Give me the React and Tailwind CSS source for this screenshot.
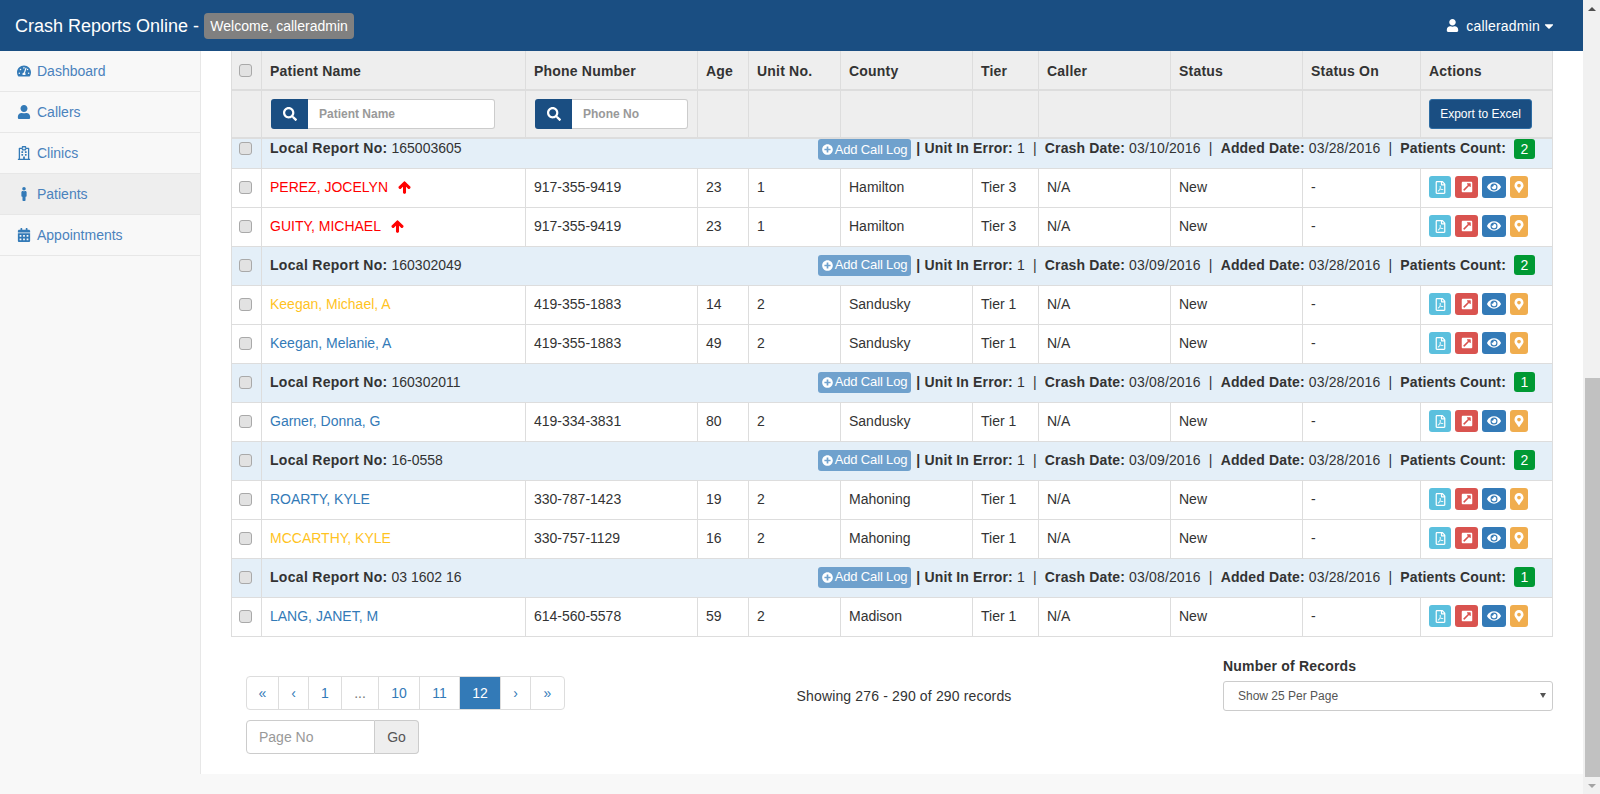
import {
    FaTachometerAlt, FaUser, FaRegHospital, FaMale, FaCalendarAlt, FaSearch, FaArrowUp,
    FaCaretDown, FaPlusCircle, FaRegFilePdf, FaExternalLinkSquareAlt, FaEye, FaMapMarkerAlt,
} from "react-icons/fa";

const NAV = [
    { label: "Dashboard", icon: FaTachometerAlt },
    { label: "Callers", icon: FaUser },
    { label: "Clinics", icon: FaRegHospital },
    { label: "Patients", icon: FaMale, active: true },
    { label: "Appointments", icon: FaCalendarAlt },
];

const HEADERS = ["Patient Name", "Phone Number", "Age", "Unit No.", "County", "Tier", "Caller", "Status", "Status On", "Actions"];

const GROUPS = [
    {
        report: "165003605", crash: "03/10/2016", count: 2, first: true,
        patients: [
            { name: "PEREZ, JOCELYN", color: "text-[#ff0000]", up: true, phone: "917-355-9419", age: 23, unit: 1, county: "Hamilton", tier: "Tier 3" },
            { name: "GUITY, MICHAEL", color: "text-[#ff0000]", up: true, phone: "917-355-9419", age: 23, unit: 1, county: "Hamilton", tier: "Tier 3" },
        ],
    },
    {
        report: "160302049", crash: "03/09/2016", count: 2,
        patients: [
            { name: "Keegan, Michael, A", color: "text-[#ffc31f]", phone: "419-355-1883", age: 14, unit: 2, county: "Sandusky", tier: "Tier 1" },
            { name: "Keegan, Melanie, A", color: "text-[#337ab7]", phone: "419-355-1883", age: 49, unit: 2, county: "Sandusky", tier: "Tier 1" },
        ],
    },
    {
        report: "160302011", crash: "03/08/2016", count: 1,
        patients: [
            { name: "Garner, Donna, G", color: "text-[#337ab7]", phone: "419-334-3831", age: 80, unit: 2, county: "Sandusky", tier: "Tier 1" },
        ],
    },
    {
        report: "16-0558", crash: "03/09/2016", count: 2,
        patients: [
            { name: "ROARTY, KYLE", color: "text-[#337ab7]", phone: "330-787-1423", age: 19, unit: 2, county: "Mahoning", tier: "Tier 1" },
            { name: "MCCARTHY, KYLE", color: "text-[#ffc31f]", phone: "330-757-1129", age: 16, unit: 2, county: "Mahoning", tier: "Tier 1" },
        ],
    },
    {
        report: "03 1602 16", crash: "03/08/2016", count: 1,
        patients: [
            { name: "LANG, JANET, M", color: "text-[#337ab7]", phone: "614-560-5578", age: 59, unit: 2, county: "Madison", tier: "Tier 1" },
        ],
    },
];

const PAGES = [
    { label: "«", w: "w-[32px]" },
    { label: "‹", w: "w-[30px]" },
    { label: "1", w: "w-[33px]" },
    { label: "...", w: "w-[37px]", muted: true },
    { label: "10", w: "w-[41px]" },
    { label: "11", w: "w-[40px]" },
    { label: "12", w: "w-[41px]", active: true },
    { label: "›", w: "w-[30px]" },
    { label: "»", w: "w-[33px]" },
];

function Check() {
    return <input type="checkbox" className="block h-[13px] w-[13px] appearance-none rounded-[3px] border border-[#a9a9a9] bg-[#e2e2e2]" />;
}

function SearchInput({ placeholder }) {
    return (
        <div className="ml-[1px] flex h-[30px]">
            <span className="flex w-[37px] shrink-0 items-center justify-center rounded-l-[3px] bg-[#1a4e82] text-white">
                <FaSearch size={14} />
            </span>
            <input
                placeholder={placeholder}
                className="w-full min-w-0 rounded-r-[3px] border border-l-0 border-[#ccc] bg-white px-[11px] text-xs font-bold placeholder:text-[#999]"
            />
        </div>
    );
}

function GroupRow({ group }) {
    return (
        <tr className="bg-[#e4eff8]">
            <td className={`border border-[#ddd] px-[7px] align-top ${group.first ? "h-[30px] pt-[3px]" : "h-[39px] pt-[12px]"}`}><Check /></td>
            <td colSpan={10} className={`border border-[#ddd] pr-[17px] pl-[8px] align-top ${group.first ? "" : "pt-[8px]"}`}>
                <div className="flex items-start justify-between">
                    <span className={`leading-[20px] ${group.first ? "-mt-[1px]" : ""}`}><b className="tracking-[0.3px]">Local Report No:</b> {group.report}</span>
                    <div className="flex items-start leading-[20px]">
                        <span className="mr-[5px] flex h-[21px] items-center gap-[2px] rounded-[3px] bg-[#6fa1cd] px-[4px] text-[13px] tracking-[-0.15px] text-white">
                            <FaPlusCircle size={11} /> Add Call Log
                        </span>
                        <span className={`tracking-[0.15px] whitespace-pre ${group.first ? "-mt-[1px]" : ""}`}>
                            <b>| Unit In Error:</b> 1{"  |  "}<b>Crash Date:</b> {group.crash}{"  |  "}<b>Added Date:</b> 03/28/2016{"  |  "}<b>Patients Count:</b>
                        </span>
                        <span className="ml-[8px] flex h-[20px] w-[21px] items-center justify-center rounded-[3px] bg-[#009933] text-white">{group.count}</span>
                    </div>
                </div>
            </td>
        </tr>
    );
}

function PatientRow({ p }) {
    const cell = "border border-[#ddd] px-[8px] pb-[1px]";
    return (
        <tr className="h-[39px] bg-white">
            <td className="border border-[#ddd] px-[7px]"><Check /></td>
            <td className={cell}>
                <span className={`inline-flex items-center gap-[10px] ${p.color}`}>
                    {p.name}
                    {p.up && <FaArrowUp size={13} stroke="currentColor" strokeWidth={40} className="text-[#ff0000]" />}
                </span>
            </td>
            <td className={cell}>{p.phone}</td>
            <td className={cell}>{p.age}</td>
            <td className={cell}>{p.unit}</td>
            <td className={cell}>{p.county}</td>
            <td className={cell}>{p.tier}</td>
            <td className={cell}>N/A</td>
            <td className={cell}>New</td>
            <td className={cell}>-</td>
            <td className={cell}>
                <div className="flex gap-[4px] text-white">
                    <span className="flex h-[22px] w-[22px] items-center justify-center rounded-[3px] bg-[#5bc0de]"><FaRegFilePdf size={13} /></span>
                    <span className="flex h-[22px] w-[23px] items-center justify-center rounded-[3px] bg-[#d9534f]"><FaExternalLinkSquareAlt size={12} /></span>
                    <span className="flex h-[22px] w-[24px] items-center justify-center rounded-[3px] bg-[#337ab7]"><FaEye size={14} /></span>
                    <span className="flex h-[22px] w-[18px] items-center justify-center rounded-[3px] bg-[#f0ad4e]"><FaMapMarkerAlt size={12} /></span>
                </div>
            </td>
        </tr>
    );
}

export default function App() {
    return (
        <div className="flex h-screen overflow-hidden bg-white font-['Liberation_Sans',Arial,sans-serif] text-sm text-[#333]">
            <div className="flex w-[1583px] shrink-0 flex-col">
                {/* Top bar */}
                <header className="flex h-[51px] shrink-0 items-center justify-between bg-[#1a4e82] pr-[27px] pl-[15px] text-white">
                    <div className="flex items-center gap-[5px]">
                        <span className="text-lg">Crash Reports Online -</span>
                        <span className="flex h-[26px] w-[150px] items-center justify-center rounded-[4px] bg-[#808080]">Welcome, calleradmin</span>
                    </div>
                    <div className="flex items-center tracking-[0.2px]">
                        <FaUser size={13} className="mr-[7px]" />
                        calleradmin
                        <FaCaretDown size={14} className="ml-[2px]" />
                    </div>
                </header>

                <div className="flex min-h-0 flex-1">
                    {/* Sidebar */}
                    <nav className="w-[201px] shrink-0 border-r border-[#e7e7e7] bg-[#f8f8f8]">
                        {NAV.map((item) => (
                            <div
                                key={item.label}
                                className={`flex h-[41px] items-center border-b border-[#e7e7e7] pl-[17px] text-[#4a82bd] ${item.active ? "bg-[#eeeeee]" : ""}`}
                            >
                                <span className="flex w-[20px] shrink-0 items-center"><item.icon size={14} className="text-[#337ab7]" /></span>
                                {item.label}
                            </div>
                        ))}
                    </nav>

                    {/* Main */}
                    <main className="flex-1 pr-[30px] pl-[30px]">
                        <table className="w-[1321px] table-fixed border-collapse">
                            <colgroup>
                                <col className="w-[30px]" />
                                <col className="w-[264px]" />
                                <col className="w-[172px]" />
                                <col className="w-[51px]" />
                                <col className="w-[92px]" />
                                <col className="w-[132px]" />
                                <col className="w-[66px]" />
                                <col className="w-[132px]" />
                                <col className="w-[132px]" />
                                <col className="w-[118px]" />
                                <col className="w-[132px]" />
                            </colgroup>
                            <thead className="bg-[#eeeeee]">
                                <tr className="h-[39px]">
                                    <th className="border border-t-0 border-b-2 border-[#ddd] px-[7px]"><Check /></th>
                                    {HEADERS.map((h) => (
                                        <th key={h} className="border border-t-0 border-b-2 border-[#ddd] px-[8px] pt-[2px] text-left font-bold tracking-[0.2px]">{h}</th>
                                    ))}
                                </tr>
                                <tr className="h-[48px]">
                                    <th className="border border-b-2 border-[#ddd]" />
                                    <th className="border border-b-2 border-[#ddd] px-[8px] pr-[30px]"><SearchInput placeholder="Patient Name" /></th>
                                    <th className="border border-b-2 border-[#ddd] pr-[9px] pl-[8px]"><SearchInput placeholder="Phone No" /></th>
                                    <th className="border border-b-2 border-[#ddd]" />
                                    <th className="border border-b-2 border-[#ddd]" />
                                    <th className="border border-b-2 border-[#ddd]" />
                                    <th className="border border-b-2 border-[#ddd]" />
                                    <th className="border border-b-2 border-[#ddd]" />
                                    <th className="border border-b-2 border-[#ddd]" />
                                    <th className="border border-b-2 border-[#ddd]" />
                                    <th className="border border-b-2 border-[#ddd] px-[8px]">
                                        <span className="flex h-[30px] w-[103px] items-center justify-center rounded-[3px] border border-[#2e6da4] bg-[#1a4e82] text-xs font-normal text-white">Export to Excel</span>
                                    </th>
                                </tr>
                            </thead>
                            <tbody>
                                {GROUPS.map((group) => [
                                    <GroupRow key={group.report} group={group} />,
                                    ...group.patients.map((p) => <PatientRow key={p.name} p={p} />),
                                ])}
                            </tbody>
                        </table>

                        {/* Pagination and page size */}
                        <div className="flex">
                            <div className="w-[400px] shrink-0 pt-[39px] pl-[15px]">
                                <div className="flex h-[34px] w-fit overflow-hidden rounded-[4px] border border-[#ddd]">
                                    {PAGES.map((page) => (
                                        <span
                                            key={page.label}
                                            className={`flex items-center justify-center border-r border-[#ddd] last:border-r-0 ${page.w} ${page.active ? "bg-[#337ab7] text-white" : page.muted ? "text-[#777]" : "text-[#337ab7]"}`}
                                        >
                                            {page.label}
                                        </span>
                                    ))}
                                </div>
                                <div className="mt-[10px] flex h-[34px] w-[173px]">
                                    <input placeholder="Page No" className="w-[129px] rounded-l-[4px] border border-[#ccc] px-[12px] placeholder:text-[#999]" />
                                    <span className="flex flex-1 items-center justify-center rounded-r-[4px] border border-l-0 border-[#ccc] bg-[#eeeeee] text-[#555]">Go</span>
                                </div>
                            </div>
                            <div className="w-[546px] shrink-0 pt-[49px] text-center tracking-[0.15px]">Showing 276 - 290 of 290 records</div>
                            <div className="ml-[46px] w-[330px] shrink-0 pt-[19px]">
                                <div className="mb-[5px] leading-[20px] font-bold tracking-[0.2px]">Number of Records</div>
                                <div className="flex h-[30px] items-center justify-between rounded-[3px] border border-[#ccc] pr-[6px] pl-[14px] text-xs text-[#555]">
                                    Show 25 Per Page
                                    <span className="h-0 w-0 border-x-[3px] border-t-[5px] border-x-transparent border-t-[#555]" />
                                </div>
                            </div>
                        </div>
                    </main>
                </div>

                <footer className="h-[20px] shrink-0 bg-[#f8f8f8]" />
            </div>

            {/* Scrollbar */}
            <div className="flex w-[17px] shrink-0 flex-col bg-[#f1f1f1]">
                <div className="flex h-[17px] items-center justify-center">
                    <span className="h-0 w-0 border-x-[4px] border-b-[4px] border-x-transparent border-b-[#505050]" />
                </div>
                <div className="flex-1" />
                <div className="ml-[2px] h-[399px] bg-[#c1c1c1]" />
                <div className="flex h-[17px] items-center justify-center">
                    <span className="h-0 w-0 border-x-[4px] border-t-[4px] border-x-transparent border-t-[#a3a3a3]" />
                </div>
            </div>
        </div>
    );
}
